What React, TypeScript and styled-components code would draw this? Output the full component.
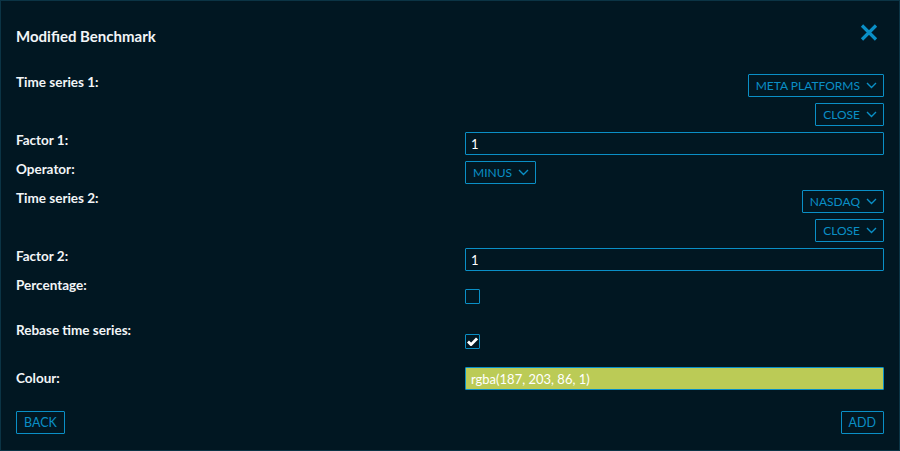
import React, { useState } from 'react';
import styled, { createGlobalStyle } from 'styled-components';

const accent = '#0a8fc6';

const GlobalStyle = createGlobalStyle`
  html, body {
    margin: 0;
    padding: 0;
    background: #011722;
    font-family: Lato, 'Noto Sans', sans-serif;
  }
`;

function Chevron() {
  return (
    <svg width='11' height='7' viewBox='0 0 11 7' fill='none'>
      <path d='M1 1l4.5 4.5L10 1' stroke={accent} strokeWidth='1.4' />
    </svg>
  );
}

function Dropdown({ value }: { value: string }) {
  return (
    <DropButton type='button'>
      {value}
      <Chevron />
    </DropButton>
  );
}

function Checkbox({ checked, onToggle }: { checked: boolean; onToggle: () => void }) {
  return (
    <Box onClick={onToggle}>
      {checked && (
        <svg width='11' height='9' viewBox='0 0 11 9'>
          <path d='M1 4.6l3 3L10 1.4' stroke='#fff' strokeWidth='2.8' fill='none' />
        </svg>
      )}
    </Box>
  );
}

function App() {
  const [percentage, setPercentage] = useState(false);
  const [rebase, setRebase] = useState(true);

  return (
    <>
      <GlobalStyle />
      <Dialog>
        <Header>
          <Title>Modified Benchmark</Title>
          <CloseButton type='button' aria-label='close'>
            <svg width='18' height='17' viewBox='0 0 18 17'>
              <path d='M2 1.5l14 14M16 1.5l-14 14' stroke={accent} strokeWidth='3.2' />
            </svg>
          </CloseButton>
        </Header>
        <Form>
          <Label>Time series 1:</Label>
          <Stack>
            <Dropdown value='META PLATFORMS' />
            <Dropdown value='CLOSE' />
          </Stack>

          <Label>Factor 1:</Label>
          <Input defaultValue='1' />

          <Label>Operator:</Label>
          <Stack $align='start'>
            <Dropdown value='MINUS' />
          </Stack>

          <Label>Time series 2:</Label>
          <Stack>
            <Dropdown value='NASDAQ' />
            <Dropdown value='CLOSE' />
          </Stack>

          <Label>Factor 2:</Label>
          <Input defaultValue='1' />

          <Label>Percentage:</Label>
          <CheckCell>
            <Checkbox checked={percentage} onToggle={() => setPercentage((p) => !p)} />
          </CheckCell>

          <Label>Rebase time series:</Label>
          <CheckCell>
            <Checkbox checked={rebase} onToggle={() => setRebase((p) => !p)} />
          </CheckCell>

          <Label $offset={3}>Colour:</Label>
          <ColourInput defaultValue='rgba(187, 203, 86, 1)' />
        </Form>
        <Footer>
          <TextButton type='button'>BACK</TextButton>
          <TextButton type='button'>ADD</TextButton>
        </Footer>
      </Dialog>
    </>
  );
}

export default App;

const Dialog = styled.div`
  box-sizing: border-box;
  width: 900px;
  height: 451px;
  border: 1px solid #0b3445;
  background: #011722;
  padding: 0 15px 0 15px;
  color: #fff;
`;

const Header = styled.div`
  display: flex;
  justify-content: space-between;
  align-items: center;
  height: 70px;
  padding-bottom: 3px;
`;

const Title = styled.h1`
  margin: 0;
  font-size: 15px;
  font-weight: 700;
  color: #f2f5f7;
`;

const CloseButton = styled.button`
  background: none;
  border: none;
  padding: 0;
  margin-right: 6px;
  margin-top: -8px;
  cursor: pointer;
  display: flex;
`;

const Form = styled.div`
  display: grid;
  grid-template-columns: 1fr 419px;
  column-gap: 10px;
  row-gap: 6px;
  align-items: start;
`;

const Label = styled.div<{ $offset?: number }>`
  font-size: 13.5px;
  font-weight: 700;
  line-height: 16px;
  color: #f2f5f7;
  padding-top: ${(p) => p.$offset ?? 0}px;
`;

const Stack = styled.div<{ $align?: 'start' | 'end' }>`
  display: flex;
  flex-direction: column;
  align-items: ${(p) => (p.$align === 'start' ? 'flex-start' : 'flex-end')};
  gap: 6px;
`;

const DropButton = styled.button`
  box-sizing: border-box;
  height: 23px;
  display: flex;
  align-items: center;
  gap: 6px;
  padding: 0 6px 0 7px;
  background: transparent;
  border: 1px solid ${accent};
  border-radius: 1px;
  color: ${accent};
  font-family: Lato, 'Noto Sans', sans-serif;
  font-size: 12px;
  cursor: pointer;
`;

const Input = styled.input`
  box-sizing: border-box;
  width: 100%;
  height: 23px;
  padding: 0 5px;
  background: transparent;
  border: 1px solid ${accent};
  border-radius: 1px;
  color: #fff;
  font-family: Lato, 'Noto Sans', sans-serif;
  font-size: 13px;
  outline: none;
`;

const ColourInput = styled(Input)`
  background: rgba(187, 203, 86, 1);
`;

const CheckCell = styled.div`
  padding: 12px 0;
`;

const Box = styled.div`
  box-sizing: border-box;
  width: 15px;
  height: 15px;
  border: 1px solid ${accent};
  border-radius: 1px;
  display: flex;
  align-items: center;
  justify-content: center;
  cursor: pointer;
`;

const Footer = styled.div`
  display: flex;
  justify-content: space-between;
  margin-top: 21px;
`;

const TextButton = styled.button`
  box-sizing: border-box;
  height: 23px;
  padding: 0 7px;
  background: transparent;
  border: 1px solid ${accent};
  border-radius: 1px;
  color: ${accent};
  font-family: Lato, 'Noto Sans', sans-serif;
  font-size: 12.5px;
  cursor: pointer;
`;
